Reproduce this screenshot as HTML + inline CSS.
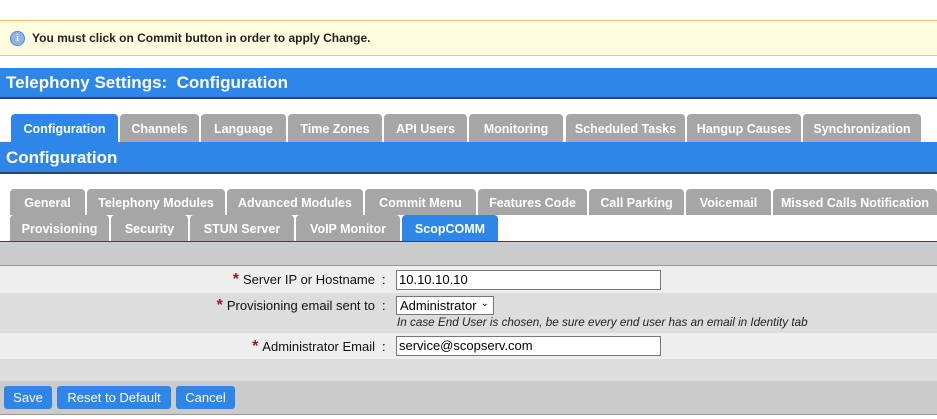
<!DOCTYPE html>
<html><head><style>
*{margin:0;padding:0;box-sizing:border-box}
body{width:937px;height:419px;position:relative;background:#fff;font-family:"Liberation Sans",sans-serif;overflow:hidden}
.a{position:absolute}
.tab{position:absolute;background:#a6a6a6;color:#fff;font-weight:bold;font-size:12.5px;text-align:center;border-radius:4px 4px 0 0;white-space:nowrap}
.t1{top:114px;height:29px;line-height:31px}
.t2{height:26px;line-height:28px}
.on{background:#2e87e8}
.bar{position:absolute;left:0;width:937px;background:#2e87e8;color:#fff;font-weight:bold;border-bottom:2px solid #1d4a7a}
.lbl{position:absolute;right:562px;font-size:13px;color:#111;white-space:nowrap}
.lbl b{color:#a01818;font-size:16px;margin-right:4px}
.col{position:absolute;left:382px;font-size:13px}
.inp{position:absolute;left:396px;width:265px;height:20px;border:1px solid #777;background:#fff;font-size:13px;padding-left:2px;line-height:18px}
.btn{position:absolute;top:386px;height:23px;background:#2e87e8;color:#fff;font-size:13px;text-align:center;line-height:24px;border-radius:3px}
</style></head><body>
<div class="a" style="left:0;top:20px;width:937px;height:36px;background:#fffbdf;border-top:1px solid #f3c86c;border-bottom:1px solid #f3c86c"></div>
<div class="a" style="left:10px;top:31px;width:15px;height:15px;border-radius:50%;background:#8fb4e8;border:1px solid #5a86c8;color:#fff;font-size:10px;line-height:13px;text-align:center;font-family:'Liberation Serif',serif;font-weight:bold">i</div>
<div class="a" style="left:32px;top:31px;font-size:12px;font-weight:bold;color:#222">You must click on Commit button in order to apply Change.</div>
<div class="bar" style="top:68px;height:31px;font-size:17px;line-height:30px;padding-left:6px">Telephony Settings:&nbsp; Configuration</div>
<div class="tab t1 on" style="left:11px;width:107px">Configuration</div>
<div class="tab t1" style="left:120px;width:79px">Channels</div>
<div class="tab t1" style="left:201px;width:85px">Language</div>
<div class="tab t1" style="left:288px;width:94px">Time Zones</div>
<div class="tab t1" style="left:384px;width:83px">API Users</div>
<div class="tab t1" style="left:469px;width:94px">Monitoring</div>
<div class="tab t1" style="left:566px;width:119px">Scheduled Tasks</div>
<div class="tab t1" style="left:687px;width:114px">Hangup Causes</div>
<div class="tab t1" style="left:803px;width:118px">Synchronization</div>
<div class="bar" style="top:142px;height:32px;font-size:17px;line-height:32px;padding-left:6px">Configuration</div>
<div class="tab t2" style="top:189px;left:10px;width:75px">General</div>
<div class="tab t2" style="top:189px;left:87px;width:138px">Telephony Modules</div>
<div class="tab t2" style="top:189px;left:227px;width:136px">Advanced Modules</div>
<div class="tab t2" style="top:189px;left:365px;width:111px">Commit Menu</div>
<div class="tab t2" style="top:189px;left:478px;width:109px">Features Code</div>
<div class="tab t2" style="top:189px;left:589px;width:95px">Call Parking</div>
<div class="tab t2" style="top:189px;left:686px;width:85px">Voicemail</div>
<div class="tab t2" style="top:189px;left:773px;width:164px">Missed Calls Notification</div>
<div class="tab t2" style="top:215px;left:10px;width:99px">Provisioning</div>
<div class="tab t2" style="top:215px;left:111px;width:77px">Security</div>
<div class="tab t2" style="top:215px;left:190px;width:104px">STUN Server</div>
<div class="tab t2" style="top:215px;left:296px;width:104px">VoIP Monitor</div>
<div class="tab t2 on" style="top:215px;left:402px;width:96px">ScopCOMM</div>
<div class="a" style="left:0;top:241px;width:937px;height:1px;background:#1d4a7a"></div>
<div class="a" style="left:0;top:242px;width:937px;height:24px;background:#cbcbcb;border-bottom:1px solid #999"></div>
<div class="a" style="left:0;top:266px;width:937px;height:27px;background:#eeeeee"></div>
<div class="a" style="left:0;top:293px;width:937px;height:40px;background:#dddddd"></div>
<div class="a" style="left:0;top:333px;width:937px;height:26px;background:#eeeeee"></div>
<div class="a" style="left:0;top:359px;width:937px;height:22px;background:#dddddd"></div>
<div class="a" style="left:0;top:381px;width:937px;height:34px;background:#cbcbcb;border-bottom:1px solid #999"></div>
<div class="lbl" style="top:271px"><b>*</b>Server IP or Hostname</div><div class="col" style="top:272px">:</div>
<div class="inp" style="top:270px">10.10.10.10</div>
<div class="lbl" style="top:297px"><b>*</b>Provisioning email sent to</div><div class="col" style="top:298px">:</div>
<div class="inp" style="top:296px;width:98px;height:19px;line-height:17px;padding-left:3px">Administrator <span style="position:absolute;right:4px;top:-2px;font-size:10px">&#8964;</span></div>
<div class="a" style="left:397px;top:316px;font-size:11.7px;font-style:italic;color:#222;white-space:nowrap">In case End User is chosen, be sure every end user has an email in Identity tab</div>
<div class="lbl" style="top:338px"><b>*</b>Administrator Email</div><div class="col" style="top:339px">:</div>
<div class="inp" style="top:336px">service@scopserv.com</div>
<div class="btn" style="left:4px;width:48px">Save</div>
<div class="btn" style="left:57px;width:114px">Reset to Default</div>
<div class="btn" style="left:176px;width:59px">Cancel</div>
</body></html>
